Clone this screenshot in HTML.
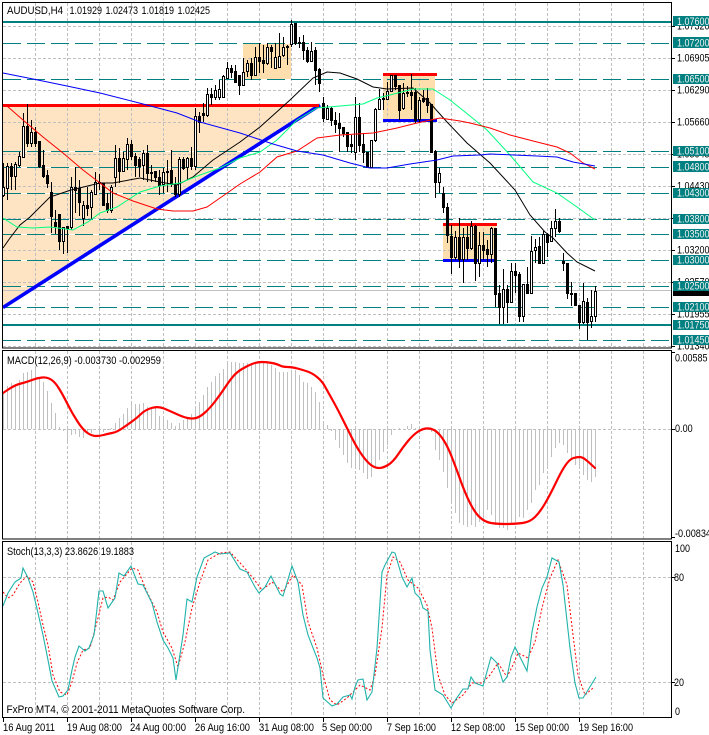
<!DOCTYPE html>
<html>
<head>
<meta charset="utf-8">
<style>
html,body{margin:0;padding:0;background:#fff;width:709px;height:735px;overflow:hidden}
svg{display:block}
text{font-family:"Liberation Sans",sans-serif;font-size:11px;fill:#000}
.w{fill:#f0f0f0}
.c{shape-rendering:crispEdges}
</style>
</head>
<body>
<svg width="709" height="735" viewBox="0 0 709 735" xmlns="http://www.w3.org/2000/svg">
<rect width="709" height="735" fill="#fff"/>

<!-- objects: background fills -->
<g class="c">
<polygon points="3,105 319,105 3,307" fill="#FFE4C4" shape-rendering="auto"/>
<rect x="243" y="43" width="48" height="36" fill="#FFDEAD"/>
<rect x="383" y="74" width="52" height="47" fill="#FFDEAD"/>
<rect x="443" y="224" width="53" height="36" fill="#FFDEAD"/>
</g>

<!-- gray grid -->
<g class="c" stroke="#c0c0c0" stroke-width="1" stroke-dasharray="3 2" fill="none">
<path d="M35.5 3V348M67.5 3V348M99.5 3V348M131.5 3V348M163.5 3V348M195.5 3V348M227.5 3V348M259.5 3V348M291.5 3V348M323.5 3V348M355.5 3V348M387.5 3V348M419.5 3V348M451.5 3V348M483.5 3V348M515.5 3V348M547.5 3V348M579.5 3V348M611.5 3V348M643.5 3V348"/>
<path d="M35.5 351V539M67.5 351V539M99.5 351V539M131.5 351V539M163.5 351V539M195.5 351V539M227.5 351V539M259.5 351V539M291.5 351V539M323.5 351V539M355.5 351V539M387.5 351V539M419.5 351V539M451.5 351V539M483.5 351V539M515.5 351V539M547.5 351V539M579.5 351V539M611.5 351V539M643.5 351V539"/>
<path d="M35.5 542V717M67.5 542V717M99.5 542V717M131.5 542V717M163.5 542V717M195.5 542V717M227.5 542V717M259.5 542V717M291.5 542V717M323.5 542V717M355.5 542V717M387.5 542V717M419.5 542V717M451.5 542V717M483.5 542V717M515.5 542V717M547.5 542V717M579.5 542V717M611.5 542V717M643.5 542V717"/>
<path d="M3 26.5H671M3 58.5H671M3 90.5H671M3 122.5H671M3 154.5H671M3 186.5H671M3 218.5H671M3 250.5H671M3 282.5H671M3 314.5H671M3 346.5H671"/>
<path d="M3 429.5H671M3 577.5H671M3 682.5H671"/>
</g>

<!-- current price line -->
<path class="c" d="M3 290.5H671" stroke="#c0c0c0" fill="none"/>

<!-- teal levels -->
<g class="c" fill="none">
<path stroke="#fff" d="M3 43.5H319M3 79.5H319M3 151.5H319M3 167.5H319M3 193.5H319M3 219.5H319M3 234.5H319M3 260.5H319M3 286.5H319"/>
<path stroke="#008080" stroke-dasharray="18 6" d="M3 43.5H671M3 79.5H671M3 151.5H671M3 167.5H671M3 193.5H671M3 219.5H671M3 234.5H671M3 260.5H671M3 286.5H671M3 307.5H671M3 340.5H671"/>
<path stroke="#008080" stroke-width="2" d="M3 22H671M3 325H671"/>
</g>

<!-- trend objects -->
<path d="M3 307.5L320 105" stroke="#0000ff" stroke-width="3.6" fill="none"/>
<g class="c" fill="#ff0000">
<rect x="3" y="104" width="316" height="3"/>
<rect x="383" y="73" width="54" height="3"/>
<rect x="443" y="223" width="54" height="3"/>
<rect x="383" y="119" width="54" height="3" fill="#0000ff"/>
<rect x="443" y="259" width="53" height="3" fill="#0000ff"/>
</g>

<!-- candles: wicks -->
<path class="c" stroke="#000" stroke-width="1" fill="none" d="M3.5 163V197M7.5 163V200M11.5 163V190M15.5 162V190M19.5 152V167M23.5 113V157M27.5 104V147M31.5 120V147M35.5 127V147M39.5 141V168M43.5 150V178M47.5 170V188M51.5 182V233M55.5 210V234M59.5 214V250M63.5 227V254M67.5 226V253M71.5 177V230M75.5 167V213M79.5 180V216M83.5 201V226M87.5 187V216M91.5 190V220M95.5 172V195M99.5 174V190M103.5 183V206M107.5 193V213M111.5 185V213M115.5 145V187M119.5 148V183M123.5 152V172M127.5 138V170M131.5 140V160M135.5 153V177M139.5 157V177M143.5 150V180M147.5 145V182M151.5 165V182M155.5 171V182M159.5 170V195M163.5 168V193M167.5 160V192M171.5 150V187M175.5 177V197M179.5 157V197M183.5 157V170M187.5 157V180M191.5 147V170M195.5 108V170M199.5 112V133M203.5 103V122M207.5 88V117M211.5 88V105M215.5 85V100M219.5 80V100M223.5 75V98M227.5 62V78M231.5 65V78M235.5 65V83M239.5 75V95M243.5 58V85M247.5 60V77M251.5 58V80M255.5 47V75M259.5 43V73M263.5 45V73M267.5 43V65M271.5 45V68M275.5 43V68M279.5 33V68M283.5 37V57M287.5 45V65M291.5 20V47M295.5 23V45M299.5 37V48M303.5 35V60M307.5 47V63M311.5 42V62M315.5 47V85M319.5 68V92M323.5 97V122M327.5 105V120M331.5 107V126M335.5 112V133M339.5 113V152M343.5 127V137M347.5 132V152M351.5 135V153M355.5 97V160M359.5 103V152M363.5 133V163M367.5 152V168M371.5 140V167M375.5 108V142M379.5 89V110M383.5 93V110M387.5 82V100M391.5 75V92M395.5 75V90M399.5 85V120M403.5 83V110M407.5 86V97M411.5 74V110M415.5 88V123M419.5 97V122M423.5 90V103M427.5 88V113M431.5 104V153M435.5 150V198M439.5 168V193M443.5 187V213M447.5 203V243M451.5 225V274M455.5 231V260M459.5 218V268M463.5 228V283M467.5 226V260M471.5 221V250M475.5 225V281M479.5 232V277M483.5 232V260M487.5 240V267M491.5 227V263M495.5 228V307M499.5 285V324M503.5 269V324M507.5 285V323M511.5 263V303M515.5 263V293M519.5 272V322M523.5 284V322M527.5 267V293M531.5 236V293M535.5 239V263M539.5 237V264M543.5 231V264M547.5 233V257M551.5 221V242M555.5 209V237M559.5 218V233M563.5 253V271M567.5 263V299M571.5 282V306M575.5 293V306M579.5 305V329M583.5 283V324M587.5 298V340M591.5 290V328M595.5 286V322"/>
<!-- candles: bear bodies -->
<path class="c" stroke="#000" stroke-width="3" fill="none" d="M11.5 166V177M27.5 126V144M35.5 132V144M39.5 141V167M43.5 165V177M47.5 175V184M51.5 192V217M55.5 222V227M59.5 214V242M67.5 226V229M75.5 187V191M79.5 188V203M87.5 205V209M99.5 182V184M103.5 183V206M107.5 203V211M119.5 158V172M131.5 144V157M135.5 156V166M139.5 159V167M147.5 153V174M151.5 172V174M155.5 171V178M159.5 177V186M167.5 171V173M171.5 170V185M175.5 185V195M183.5 159V169M191.5 158V167M199.5 116V123M203.5 113V116M211.5 94V98M231.5 68V73M235.5 71V83M239.5 75V86M251.5 63V76M259.5 57V62M263.5 60V64M271.5 47V52M287.5 46V48M295.5 23V44M299.5 42V44M303.5 42V51M307.5 50V62M315.5 50V71M319.5 69V84M323.5 103V119M331.5 108V121M335.5 120V125M339.5 123V129M343.5 127V134M347.5 132V147M351.5 144V147M359.5 117V146M363.5 144V153M367.5 152V168M383.5 98V100M395.5 75V87M399.5 85V111M407.5 92V94M411.5 92V96M415.5 92V121M423.5 98V102M427.5 98V106M431.5 104V153M435.5 151V183M443.5 193V208M447.5 207V236M451.5 236V258M459.5 237V260M467.5 237V249M475.5 226V264M483.5 245V251M487.5 249V255M495.5 228V295M499.5 293V308M507.5 289V303M515.5 271V276M519.5 274V317M527.5 284V294M539.5 246V264M547.5 234V243M559.5 221V232M563.5 261V264M567.5 263V294M571.5 293V295M575.5 293V306M579.5 305V323M587.5 302V323"/>
<!-- candles: bull bodies -->
<path class="c" stroke="#000" stroke-width="1" fill="#fff" d="M2.5 187.5H4.5V195.5H2.5ZM6.5 166.5H8.5V188.5H6.5ZM14.5 164.5H16.5V176.5H14.5ZM18.5 156.5H20.5V165.5H18.5ZM22.5 126.5H24.5V157.5H22.5ZM30.5 132.5H32.5V143.5H30.5ZM62.5 227.5H64.5V241.5H62.5ZM70.5 187.5H72.5V227.5H70.5ZM82.5 205.5H84.5V218.5H82.5ZM90.5 192.5H92.5V207.5H90.5ZM94.5 182.5H96.5V194.5H94.5ZM110.5 187.5H112.5V210.5H110.5ZM114.5 158.5H116.5V177.5H114.5ZM122.5 158.5H124.5V171.5H122.5ZM126.5 144.5H128.5V159.5H126.5ZM142.5 153.5H144.5V165.5H142.5ZM162.5 172.5H164.5V184.5H162.5ZM178.5 159.5H180.5V194.5H178.5ZM186.5 158.5H188.5V167.5H186.5ZM194.5 116.5H196.5V166.5H194.5ZM206.5 94.5H208.5V115.5H206.5ZM214.5 90.5H216.5V97.5H214.5ZM218.5 89.5H220.5V97.5H218.5ZM222.5 76.5H224.5V97.5H222.5ZM226.5 68.5H228.5V78.5H226.5ZM242.5 72.5H244.5V85.5H242.5ZM246.5 63.5H248.5V71.5H246.5ZM254.5 57.5H256.5V75.5H254.5ZM266.5 47.5H268.5V63.5H266.5ZM274.5 57.5H276.5V68.5H274.5ZM278.5 56.5H280.5V67.5H278.5ZM282.5 47.5H284.5V55.5H282.5ZM290.5 24.5H292.5V44.5H290.5ZM310.5 51.5H312.5V61.5H310.5ZM326.5 108.5H328.5V119.5H326.5ZM354.5 117.5H356.5V152.5H354.5ZM370.5 140.5H372.5V167.5H370.5ZM374.5 109.5H376.5V140.5H374.5ZM378.5 99.5H380.5V109.5H378.5ZM386.5 91.5H388.5V99.5H386.5ZM390.5 75.5H392.5V91.5H390.5ZM402.5 93.5H404.5V108.5H402.5ZM418.5 100.5H420.5V119.5H418.5ZM438.5 173.5H440.5V182.5H438.5ZM454.5 237.5H456.5V257.5H454.5ZM462.5 237.5H464.5V259.5H462.5ZM470.5 226.5H472.5V248.5H470.5ZM478.5 245.5H480.5V263.5H478.5ZM490.5 228.5H492.5V254.5H490.5ZM502.5 289.5H504.5V307.5H502.5ZM510.5 271.5H512.5V302.5H510.5ZM522.5 284.5H524.5V316.5H522.5ZM530.5 251.5H532.5V293.5H530.5ZM534.5 247.5H536.5V250.5H534.5ZM542.5 234.5H544.5V263.5H542.5ZM550.5 228.5H552.5V241.5H550.5ZM554.5 221.5H556.5V228.5H554.5ZM582.5 301.5H584.5V322.5H582.5ZM590.5 316.5H592.5V321.5H590.5ZM594.5 291.5H596.5V316.5H594.5Z"/>

<!-- moving averages -->
<g fill="none" stroke-width="1">
<polyline stroke="#000" points="3,248 10,238 20,225 30,217 50,197 71,190 100,183 113,183 140,178 160,182 177,185 193,177 213,160 240,142 260,127 290,100 313,78 327,72 340,73 357,79 373,87 387,89 413,88 430,103 447,122 467,143 490,163 515,190 530,215 545,232 553,238 567,253 577,262 595,271"/>
<polyline stroke="#00FF7F" points="3,218 17,227 33,228 50,227 73,230 88,222 100,213 117,207 140,192 160,186 180,183 200,175 220,168 240,158 260,152 277,140 297,120 317,108 340,106 363,104 377,98 390,95 413,89 433,89 450,100 470,116 487,130 510,155 533,182 557,193 577,207 595,220"/>
<polyline stroke="#ff0000" points="7,106 23,120 43,137 63,153 83,170 100,183 113,193 133,201 157,209 173,211 193,211 207,207 220,198 240,184 260,172 277,157 297,151 317,138 340,135 373,133 397,128 417,123 440,118 460,121 470,123 490,128 510,135 537,142 557,147 570,153 583,163 595,169"/>
<polyline stroke="#0000ff" points="3,73 33,79 67,86 100,93 143,104 177,113 200,122 240,133 273,144 297,151 323,155 350,163 370,168 387,168 410,164 437,160 453,156 480,155 490,154 537,156 557,157 573,162 595,166"/>
</g>

<!-- MACD histogram -->
<path class="c" stroke="#c0c0c0" stroke-width="1" fill="none" d="M3.5 429V392M7.5 429V386M11.5 429V383M15.5 429V384M19.5 429V380M23.5 429V373M27.5 429V372M31.5 429V370M35.5 429V368M39.5 429V377M43.5 429V382M47.5 429V391M51.5 429V403M55.5 429V413M59.5 429V427M63.5 429V431M67.5 429V442M71.5 429V435M75.5 429V434M79.5 429V437M83.5 429V438M87.5 429V433M91.5 429V433M95.5 429V430M99.5 429V435M103.5 429V432M107.5 429V430M111.5 429V428M115.5 429V423M119.5 429V418M123.5 429V414M127.5 429V408M131.5 429V404M135.5 429V404M139.5 429V404M143.5 429V403M147.5 429V407M151.5 429V409M155.5 429V408M159.5 429V416M163.5 429V417M167.5 429V420M171.5 429V423M175.5 429V426M179.5 429V423M183.5 429V420M187.5 429V418M191.5 429V414M195.5 429V408M199.5 429V402M203.5 429V395M207.5 429V387M211.5 429V382M215.5 429V376M219.5 429V373M223.5 429V369M227.5 429V362M231.5 429V362M235.5 429V362M239.5 429V363M243.5 429V363M247.5 429V363M251.5 429V363M255.5 429V363M259.5 429V362M263.5 429V363M267.5 429V363M271.5 429V365M275.5 429V368M279.5 429V372M283.5 429V372M287.5 429V372M291.5 429V370M295.5 429V370M299.5 429V375M303.5 429V382M307.5 429V383M311.5 429V387M315.5 429V392M319.5 429V402M323.5 429V422M327.5 429V425M331.5 429V431M335.5 429V440M339.5 429V448M343.5 429V455M347.5 429V463M351.5 429V468M355.5 429V468M359.5 429V470M363.5 429V473M367.5 429V479M371.5 429V477M375.5 429V468M379.5 429V460M383.5 429V452M387.5 429V445M391.5 429V435M395.5 429V430M399.5 429V428M403.5 429V430M407.5 429V426M411.5 429V424M415.5 429V428M419.5 429V430M423.5 429V430M427.5 429V430M431.5 429V432M435.5 429V450M439.5 429V460M443.5 429V472M447.5 429V488M451.5 429V503M455.5 429V513M459.5 429V523M463.5 429V525M467.5 429V527M471.5 429V525M475.5 429V527M479.5 429V522M483.5 429V522M487.5 429V510M491.5 429V515M495.5 429V525M499.5 429V528M503.5 429V528M507.5 429V530M511.5 429V525M515.5 429V523M519.5 429V517M523.5 429V518M527.5 429V510M531.5 429V503M535.5 429V490M539.5 429V485M543.5 429V473M547.5 429V467M551.5 429V457M555.5 429V448M559.5 429V443M563.5 429V445M567.5 429V453M571.5 429V460M575.5 429V465M579.5 429V468M583.5 429V475M587.5 429V480M591.5 429V482M595.5 429V477"/>
<!-- MACD signal -->
<path fill="none" stroke="#ff0000" stroke-width="2.2" stroke-linecap="round" d="M3 393L9 389Q15 385 21 383.5Q27 382 32 380Q37 378 42 377.5Q47 377 51 379.5Q55 382 59 388.5Q63 395 67.5 404Q72 413 77.5 421.5Q83 430 87.5 433Q92 436 96 436Q100 436 103.5 435Q107 434 112 433Q117 432 122 428.5Q127 425 132 421.5Q137 418 141 414Q145 410 151.5 408Q158 406 164 408.5Q170 411 176.5 414Q183 417 187.5 418Q192 419 196 418Q200 417 205 412.5Q210 408 215 401.5Q220 395 225 387.5Q230 380 233.5 376Q237 372 242 369Q247 366 252 364Q257 362 262 362Q267 362 272 363Q277 364 280 365.5Q283 367 287.5 367Q292 367 297.5 368.5Q303 370 307.5 371.5Q312 373 317 377Q322 381 325 386.5Q328 392 332.5 400Q337 408 342 418Q347 428 352 438Q357 448 362 455Q367 462 371 465Q375 468 379 468Q383 468 388 465Q393 462 398 454.5Q403 447 408 441Q413 435 417.5 432Q422 429 426 428.5Q430 428 434 430Q438 432 442.5 438.5Q447 445 451 455Q455 465 460 479Q465 493 470 503Q475 513 480 517.5Q485 522 491 523Q497 524 506 524Q515 524 522.5 523Q530 522 535 517Q540 512 545 503.5Q550 495 556 482.5Q562 470 566 464.5Q570 459 573.5 458Q577 457 580 457Q583 457 589 462.5L595 468"/>

<!-- Stochastic -->
<polyline fill="none" stroke="#ff0000" stroke-width="1" stroke-dasharray="2 2" points="3,592 8,598 13,595 20,583 27,576 33,582 38,602 43,625 48,645 53,675 60,692 67,695 72,682 77,663 83,650 90,648 98,618 103,598 108,597 113,600 120,582 132,568 138,570 147,592 157,612 163,632 172,648 178,667 185,642 192,608 200,582 208,560 220,553 230,552 242,565 253,578 262,590 272,582 283,592 293,575 302,585 308,622 317,648 323,675 330,700 337,705 347,698 353,692 360,685 370,690 375,675 382,628 387,575 393,557 400,562 408,580 418,588 427,605 432,628 438,675 445,695 452,703 463,695 472,683 482,683 490,675 498,663 507,677 513,665 518,653 528,658 535,642 542,608 550,578 558,560 567,585 573,635 578,675 585,695 593,688"/>
<polyline fill="none" stroke="#20B2AA" stroke-width="1.1" points="3,606 8,593 15,582 21,578 23,568 28,578 33,592 38,613 43,635 48,660 52,681 59,697 63,696 68,690 72,670 75,657 79,646 85,651 89,648 94,635 99,591 103,591 108,608 115,598 119,573 124,576 131,566 138,584 143,585 152,603 157,622 163,640 168,648 173,658 176,680 183,635 187,599 192,602 197,577 204,558 215,552 220,554 230,553 240,569 247,572 255,587 259,593 265,587 271,576 280,594 283,596 292,566 298,582 303,615 308,635 317,658 320,668 323,698 332,706 337,704 343,697 350,695 352,699 355,687 358,680 363,679 367,700 372,692 377,648 382,572 385,565 392,552 395,553 402,577 407,587 412,578 415,593 420,598 423,608 428,611 430,650 435,690 443,695 451,708 456,699 463,689 468,689 471,677 475,683 483,686 491,657 497,663 503,682 507,677 511,657 515,647 527,671 532,632 537,607 542,588 547,577 552,558 559,562 563,585 570,648 575,683 579,698 583,698 588,690 596,677"/>

<!-- pane borders -->
<g class="c" fill="none" stroke="#000" stroke-width="1">
<rect x="2.5" y="2.5" width="669" height="345.5"/>
<rect x="2.5" y="350.5" width="669" height="188.5"/>
<rect x="2.5" y="541.5" width="669" height="176"/>
<path d="M672 26.5h3M672 58.5h3M672 90.5h3M672 122.5h3M672 154.5h3M672 186.5h3M672 218.5h3M672 250.5h3M672 282.5h3M672 314.5h3M672 346.5h3"/>
<path d="M672 429.5h3M672 577.5h3M672 682.5h3M672 352.5h3M672 537.5h3"/>
<path d="M3.5 718V722M67.5 718V722M131.5 718V722M195.5 718V722M259.5 718V722M323.5 718V722M387.5 718V722M451.5 718V722M515.5 718V722M579.5 718V722"/>
</g>

<!-- axis price labels -->
<g>
<text x="677" y="29.5" textLength="32.5" lengthAdjust="spacingAndGlyphs">1.07320</text>
<text x="677" y="61.5" textLength="32.5" lengthAdjust="spacingAndGlyphs">1.06905</text>
<text x="677" y="93.5" textLength="32.5" lengthAdjust="spacingAndGlyphs">1.06290</text>
<text x="677" y="125.5" textLength="32.5" lengthAdjust="spacingAndGlyphs">1.05660</text>
<text x="677" y="157.5" textLength="32.5" lengthAdjust="spacingAndGlyphs">1.05045</text>
<text x="677" y="189.5" textLength="32.5" lengthAdjust="spacingAndGlyphs">1.04430</text>
<text x="677" y="221.5" textLength="32.5" lengthAdjust="spacingAndGlyphs">1.03815</text>
<text x="677" y="253.5" textLength="32.5" lengthAdjust="spacingAndGlyphs">1.03200</text>
<text x="677" y="285.5" textLength="32.5" lengthAdjust="spacingAndGlyphs">1.02570</text>
<text x="677" y="317.5" textLength="32.5" lengthAdjust="spacingAndGlyphs">1.01955</text>
<text x="677" y="349.5" textLength="32.5" lengthAdjust="spacingAndGlyphs">1.01340</text>
<rect class="c" x="673" y="290" width="36" height="6" fill="#000"/>
</g>
<g class="c" fill="#008080">
<rect x="673" y="16" width="36" height="10"/>
<rect x="673" y="37" width="36" height="11"/>
<rect x="673" y="74" width="36" height="10"/>
<rect x="673" y="146" width="36" height="10"/>
<rect x="673" y="161" width="36" height="11"/>
<rect x="673" y="188" width="36" height="10"/>
<rect x="673" y="214" width="36" height="10"/>
<rect x="673" y="229" width="36" height="10"/>
<rect x="673" y="255" width="36" height="10"/>
<rect x="673" y="281" width="36" height="10"/>
<rect x="673" y="302" width="36" height="10"/>
<rect x="673" y="320" width="36" height="10"/>
<rect x="673" y="335" width="36" height="10"/>
</g>
<g>
<text class="w" x="677" y="25" textLength="32.5" lengthAdjust="spacingAndGlyphs">1.07600</text>
<text class="w" x="677" y="46.5" textLength="32.5" lengthAdjust="spacingAndGlyphs">1.07200</text>
<text class="w" x="677" y="82.5" textLength="32.5" lengthAdjust="spacingAndGlyphs">1.06500</text>
<text class="w" x="677" y="154.5" textLength="32.5" lengthAdjust="spacingAndGlyphs">1.05100</text>
<text class="w" x="677" y="170.5" textLength="32.5" lengthAdjust="spacingAndGlyphs">1.04800</text>
<text class="w" x="677" y="196.5" textLength="32.5" lengthAdjust="spacingAndGlyphs">1.04300</text>
<text class="w" x="677" y="222.5" textLength="32.5" lengthAdjust="spacingAndGlyphs">1.03800</text>
<text class="w" x="677" y="237.5" textLength="32.5" lengthAdjust="spacingAndGlyphs">1.03500</text>
<text class="w" x="677" y="263.5" textLength="32.5" lengthAdjust="spacingAndGlyphs">1.03000</text>
<text class="w" x="677" y="289.5" textLength="32.5" lengthAdjust="spacingAndGlyphs">1.02500</text>
<text class="w" x="677" y="310.5" textLength="32.5" lengthAdjust="spacingAndGlyphs">1.02100</text>
<text class="w" x="677" y="328.5" textLength="32.5" lengthAdjust="spacingAndGlyphs">1.01750</text>
<text class="w" x="677" y="343.5" textLength="32.5" lengthAdjust="spacingAndGlyphs">1.01450</text>
<text x="675" y="361.5" textLength="32.5" lengthAdjust="spacingAndGlyphs">0.00585</text>
<text x="675" y="432" textLength="17.7" lengthAdjust="spacingAndGlyphs">0.00</text>
<text x="675" y="537" textLength="36" lengthAdjust="spacingAndGlyphs">-0.00834</text>
<text x="675" y="552" textLength="15" lengthAdjust="spacingAndGlyphs">100</text>
<text x="674" y="581" textLength="10" lengthAdjust="spacingAndGlyphs">80</text>
<text x="674" y="686" textLength="10" lengthAdjust="spacingAndGlyphs">20</text>
<text x="675" y="715" textLength="5" lengthAdjust="spacingAndGlyphs">0</text>
</g>

<!-- captions -->
<g>
<text x="7" y="14" textLength="56" lengthAdjust="spacingAndGlyphs">AUDUSD,H4</text>
<text x="69.5" y="14" textLength="32.5" lengthAdjust="spacingAndGlyphs">1.01929</text>
<text x="105.5" y="14" textLength="32.5" lengthAdjust="spacingAndGlyphs">1.02473</text>
<text x="141.5" y="14" textLength="32.5" lengthAdjust="spacingAndGlyphs">1.01819</text>
<text x="177.5" y="14" textLength="32.5" lengthAdjust="spacingAndGlyphs">1.02425</text>
<text x="7" y="364" textLength="154" lengthAdjust="spacingAndGlyphs">MACD(12,26,9) -0.003730 -0.002959</text>
<text x="7" y="555" textLength="127" lengthAdjust="spacingAndGlyphs">Stoch(13,3,3) 23.8626 19.1883</text>
<text x="6.5" y="713" textLength="238.5" lengthAdjust="spacingAndGlyphs">FxPro MT4, © 2001-2011 MetaQuotes Software Corp.</text>
<text x="3" y="731" textLength="52" lengthAdjust="spacingAndGlyphs">16 Aug 2011</text>
<text x="67" y="731" textLength="55" lengthAdjust="spacingAndGlyphs">19 Aug 08:00</text>
<text x="130" y="731" textLength="56" lengthAdjust="spacingAndGlyphs">24 Aug 00:00</text>
<text x="195" y="731" textLength="55" lengthAdjust="spacingAndGlyphs">26 Aug 16:00</text>
<text x="259" y="731" textLength="55" lengthAdjust="spacingAndGlyphs">31 Aug 08:00</text>
<text x="322" y="731" textLength="50" lengthAdjust="spacingAndGlyphs">5 Sep 00:00</text>
<text x="387" y="731" textLength="49" lengthAdjust="spacingAndGlyphs">7 Sep 16:00</text>
<text x="451" y="731" textLength="54" lengthAdjust="spacingAndGlyphs">12 Sep 08:00</text>
<text x="515" y="731" textLength="54" lengthAdjust="spacingAndGlyphs">15 Sep 00:00</text>
<text x="579" y="731" textLength="54" lengthAdjust="spacingAndGlyphs">19 Sep 16:00</text>
</g>
</svg>
</body>
</html>
